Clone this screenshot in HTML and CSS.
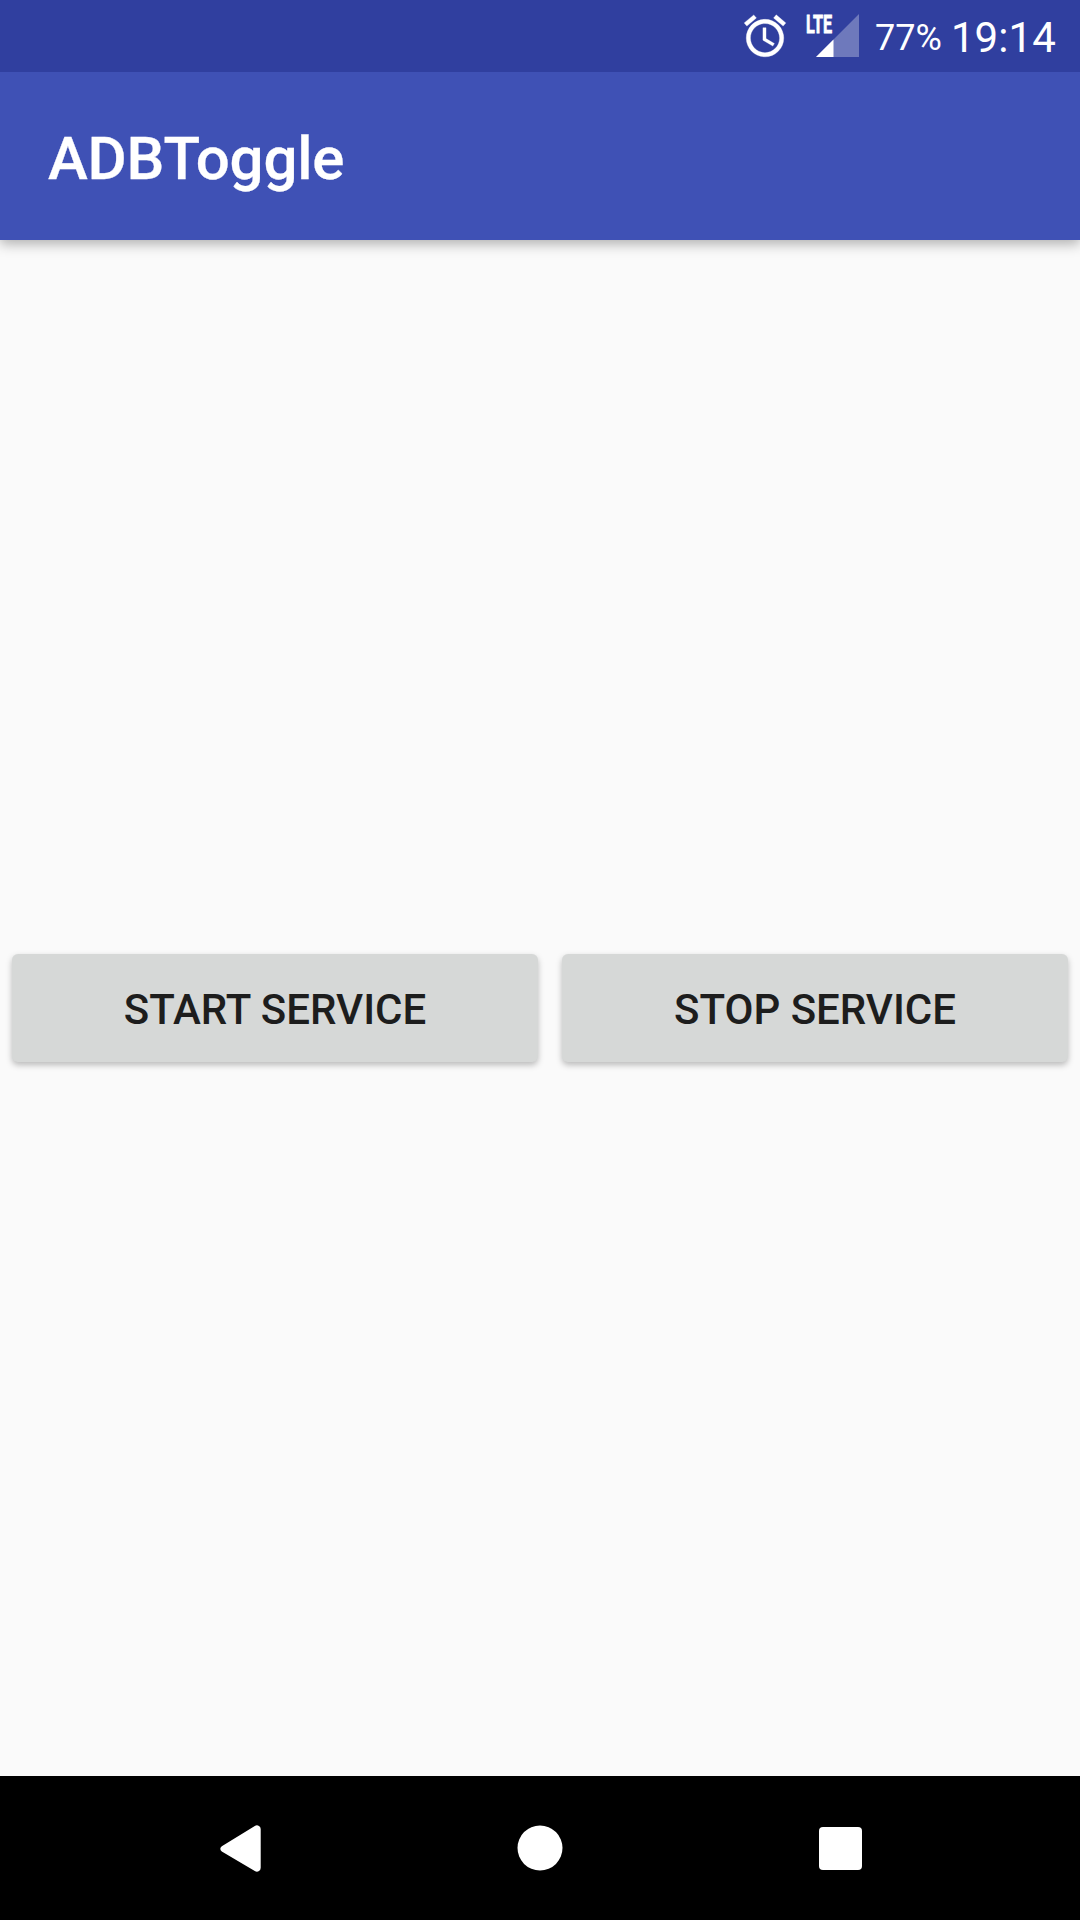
FILE: index.html
```html
<!DOCTYPE html>
<html lang="en">
<head>
<meta charset="utf-8">
<title>ADBToggle</title>
<link rel="stylesheet" href="styles.css">
</head>
<body>
<div class="status-bar">
  <svg class="alarm" width="50" height="50" viewBox="0 0 24 24"><path fill="#fff" stroke="#fff" stroke-width=".15" d="M22 5.72l-4.6-3.86-1.29 1.53 4.6 3.86L22 5.72zM7.88 3.39L6.6 1.86 2 5.71l1.29 1.53 4.59-3.85zM12.5 8H11v6l4.75 2.85.75-1.23-4-2.37V8zM12 4c-4.97 0-9 4.03-9 9s4.02 9 9 9a9 9 0 0 0 0-18zm0 16c-3.87 0-7-3.13-7-7s3.13-7 7-7 7 3.13 7 7-3.13 7-7 7z"/></svg>
  <div class="signal">
    <svg width="43" height="43" viewBox="0 0 43 43"><path fill="#fff" fill-opacity=".3" d="M0 43L43 0V43Z"/><path fill="#fff" d="M0 43L17.5 25.5V43Z"/></svg>
    <span class="network">LTE</span>
  </div>
  <span class="battery">77%</span>
  <span class="clock">19:14</span>
</div>
<header class="app-bar"><h1 class="title">ADBToggle</h1></header>
<main class="content">
  <button class="button">Start service</button>
  <button class="button">Stop service</button>
</main>
<nav class="nav-bar">
  <svg width="48" height="48" viewBox="0 0 48 48"><path fill="#fff" d="M5.8 22.2L38.8 2Q41 .7 43 2Q44.7 3 44.7 5V43.8Q44.7 46 43 47Q41 48.3 38.8 47L5.8 27.4Q4.3 26.3 4.3 24.8Q4.3 23.3 5.8 22.2Z"/></svg>
  <svg width="48" height="48" viewBox="0 0 48 48"><circle cx="24" cy="24" r="22.5" fill="#fff"/></svg>
  <svg width="48" height="48" viewBox="0 0 48 48"><rect x="3" y="3" width="43" height="43" rx="4" fill="#fff"/></svg>
</nav>
</body>
</html>
```
FILE: styles.css
```css
* { box-sizing: border-box; }
body { margin: 0; width: 1080px; height: 1920px; display: flex; flex-direction: column; background: #fafafa; font-family: Roboto, sans-serif; overflow: hidden; }
.status-bar { position: relative; z-index: 1; height: 72px; background: #303f9f; color: #fff; display: flex; align-items: center; justify-content: flex-end; padding-right: 24px; }
.alarm { margin-top: -1px; }
.signal { position: relative; width: 54px; height: 43px; margin: -1px 0 0 15px; display: flex; justify-content: flex-end; }
.network { position: absolute; left: 1px; top: -3px; font-size: 26.5px; line-height: 26px; font-weight: 700; -webkit-text-stroke: .8px #fff; transform: scaleX(.61); transform-origin: left; }
.battery { font-size: 36px; margin-left: 16px; padding-top: 4px; }
.clock { font-size: 42px; margin-left: 9px; padding-top: 2px; letter-spacing: .1px; }
.app-bar { height: 168px; background: #3f51b5; display: flex; align-items: center; padding: 4px 0 0 48px; box-shadow: 0 4px 12px rgba(0,0,0,.3); }
.title { margin: 0; color: #fff; font-size: 60px; font-weight: 500; letter-spacing: -.2px; -webkit-text-stroke: .3px #fff; }
.content { flex: 1; display: grid; grid-template-columns: 526px 506px; column-gap: 24px; padding: 0 12px; align-content: center; }
.button { height: 108px; border: 0; border-radius: 6px; padding: 2px 0 0; background: #d6d8d7; color: #1d1d1d; font: 500 42px Roboto, sans-serif; text-transform: uppercase; box-shadow: 0 3px 6px rgba(0,0,0,.26); }
.nav-bar { height: 144px; background: #000; display: flex; align-items: center; justify-content: center; gap: 252px; }
```
